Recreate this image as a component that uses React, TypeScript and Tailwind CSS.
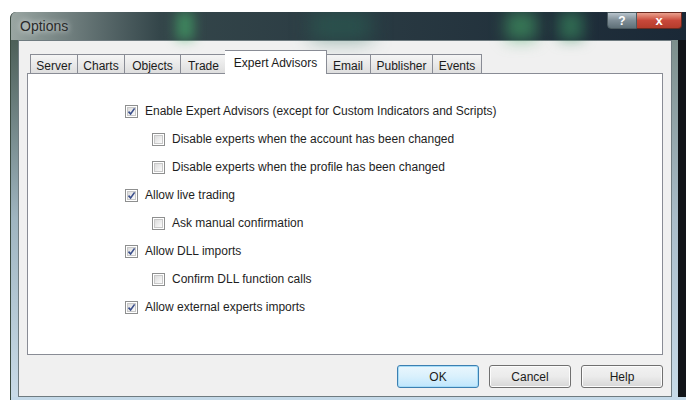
import { useState } from 'react';

const tabs = [
  { name: 'Server', w: 'w-[48px]' },
  { name: 'Charts', w: 'w-[47px]' },
  { name: 'Objects', w: 'w-[56px]' },
  { name: 'Trade', w: 'w-[46px]' },
  { name: 'Expert Advisors', w: 'w-[102px]' },
  { name: 'Email', w: 'w-[45px]' },
  { name: 'Publisher', w: 'w-[62px]' },
  { name: 'Events', w: 'w-[49px]' },
];

const options = [
  { label: 'Enable Expert Advisors (except for Custom Indicators and Scripts)', checked: true, sub: false },
  { label: 'Disable experts when the account has been changed', checked: false, sub: true },
  { label: 'Disable experts when the profile has been changed', checked: false, sub: true },
  { label: 'Allow live trading', checked: true, sub: false },
  { label: 'Ask manual confirmation', checked: false, sub: true },
  { label: 'Allow DLL imports', checked: true, sub: false },
  { label: 'Confirm DLL function calls', checked: false, sub: true },
  { label: 'Allow external experts imports', checked: true, sub: false },
];

const CheckBox = ({ checked }: { checked: boolean }) => (
  <div className="w-[13px] h-[13px] border border-[#8e8f8f] bg-white p-px shrink-0">
    <div className="w-full h-full bg-gradient-to-br from-[#dcdcdc] to-[#fbfbfb] border border-[#c8c8c8] relative">
      {checked && (
        <svg viewBox="0 0 9 9" className="absolute -left-px -top-px w-[9px] h-[9px]">
          <path d="M1.5 4.6 L3.6 6.9 L7.6 1.4" fill="none" stroke="#3b4f8c" strokeWidth="1.6" />
        </svg>
      )}
    </div>
  </div>
);

const Button = ({ label, primary }: { label: string; primary?: boolean }) => (
  <button
    className={`w-[82px] h-[23px] rounded-[3px] border text-[12px] text-[#1b1b1b] ${
      primary
        ? 'border-[#3c7fb1] bg-gradient-to-b from-[#eaf6fd] via-[#d9f0fc] to-[#bee6fd] shadow-[inset_0_0_0_1px_#a6dcf7]'
        : 'border-[#707070] bg-gradient-to-b from-[#f2f2f2] via-[#ebebeb] to-[#d6d6d6] shadow-[inset_0_0_0_1px_#fcfcfc]'
    }`}
  >
    {label}
  </button>
);

export default function App() {
  const [opts, setOpts] = useState(options);

  return (
    <div className="w-[700px] h-[417px] bg-white pt-[12px] pl-[10px] font-['Liberation_Sans',sans-serif] overflow-hidden">
      <div className="w-[676px] h-[388px] flex flex-col rounded-tl-[6px] overflow-hidden bg-[#1d2b30] border-l border-[#3a4a40]">
        {/* Title bar */}
        <div className="relative h-[28px] shrink-0 flex items-center pl-[9px] bg-gradient-to-r from-[#9aa6a2] via-[#34464a] via-[22%] to-[#1a2836]">
          <div className="absolute left-[165px] top-0 w-[18px] h-full bg-[#46b06a]/60 blur-[6px]" />
          <div className="absolute left-[300px] top-0 w-[60px] h-full bg-[#2a6a58]/50 blur-[10px]" />
          <div className="absolute left-[495px] top-0 w-[30px] h-full bg-[#46a868]/60 blur-[8px]" />
          <div className="absolute left-[548px] top-0 w-[24px] h-full bg-[#3a9060]/60 blur-[7px]" />
          <span className="relative text-[14px] text-[#2a2a2a] [text-shadow:0_0_6px_#fff]">Options</span>
          <div className="absolute top-0 right-[4px] flex h-[17px]">
            <div className="w-[30px] h-full rounded-bl-[4px] border border-[#4b5a60] bg-gradient-to-b from-[#b8c4cc] via-[#7e8d96] to-[#5f7078] flex items-center justify-center text-white text-[12px] font-bold">
              ?
            </div>
            <div className="w-[45px] h-full rounded-br-[4px] border border-l-0 border-[#6a2a20] bg-gradient-to-b from-[#e9a08e] via-[#c8483a] to-[#b43c2c] flex items-center justify-center text-white text-[13px] font-bold">
              x
            </div>
          </div>
        </div>

        <div className="flex flex-1">
          {/* left frame */}
          <div className="w-[7px] bg-gradient-to-b from-[#4d5f58] via-[#9fb5c0] to-[#c9dbe8]" />
          {/* Client area */}
          <div className="w-[654px] flex flex-col bg-[#f0f0f0] border border-[#6f7b80] pt-[9px] pl-[8px] pr-[8px]">
            <div className="flex items-end h-[24px] pl-[3px] relative z-10">
              {tabs.map((t, i) => {
                const active = t.name === 'Expert Advisors';
                return (
                  <div
                    key={t.name}
                    className={`${t.w} text-center text-[12px] text-[#1b1b1b] border border-[#898c95] ${i > 0 ? 'border-l-0' : ''} ${
                      active
                        ? 'h-[24px] bg-white border-b-0 pt-[3px] border-l -ml-[2px] -mr-[1px] relative z-10'
                        : 'h-[20px] pt-[2px] bg-gradient-to-b from-[#f5f5f5] to-[#dedede]'
                    }`}
                  >
                    {t.name}
                  </div>
                );
              })}
            </div>
            <div className="h-[282px] -mt-px border border-[#898c95] bg-white pl-[97px] pt-[23px] flex flex-col">
              {opts.map((o, i) => (
                <label
                  key={o.label}
                  className={`h-[28px] flex items-center gap-[7px] text-[12px] text-[#1e1e1e] ${o.sub ? 'pl-[27px]' : ''}`}
                  onClick={() =>
                    setOpts((p) => p.map((x, j) => (j === i ? { ...x, checked: !x.checked } : x)))
                  }
                >
                  <CheckBox checked={o.checked} />
                  <span>{o.label}</span>
                </label>
              ))}
            </div>
            <div className="flex justify-end gap-[10px] mt-[10px]">
              <Button label="OK" primary />
              <Button label="Cancel" />
              <Button label="Help" />
            </div>
          </div>
          {/* right frame */}
          <div className="w-[6px] bg-gradient-to-b from-[#7d8f8c] via-[#a9bcc8] to-[#c7dbe8]" />
          <div className="flex-1 bg-[#111418]" />
        </div>
        <div className="h-[3px] bg-[#c4d9e8] shrink-0" />
      </div>
    </div>
  );
}
